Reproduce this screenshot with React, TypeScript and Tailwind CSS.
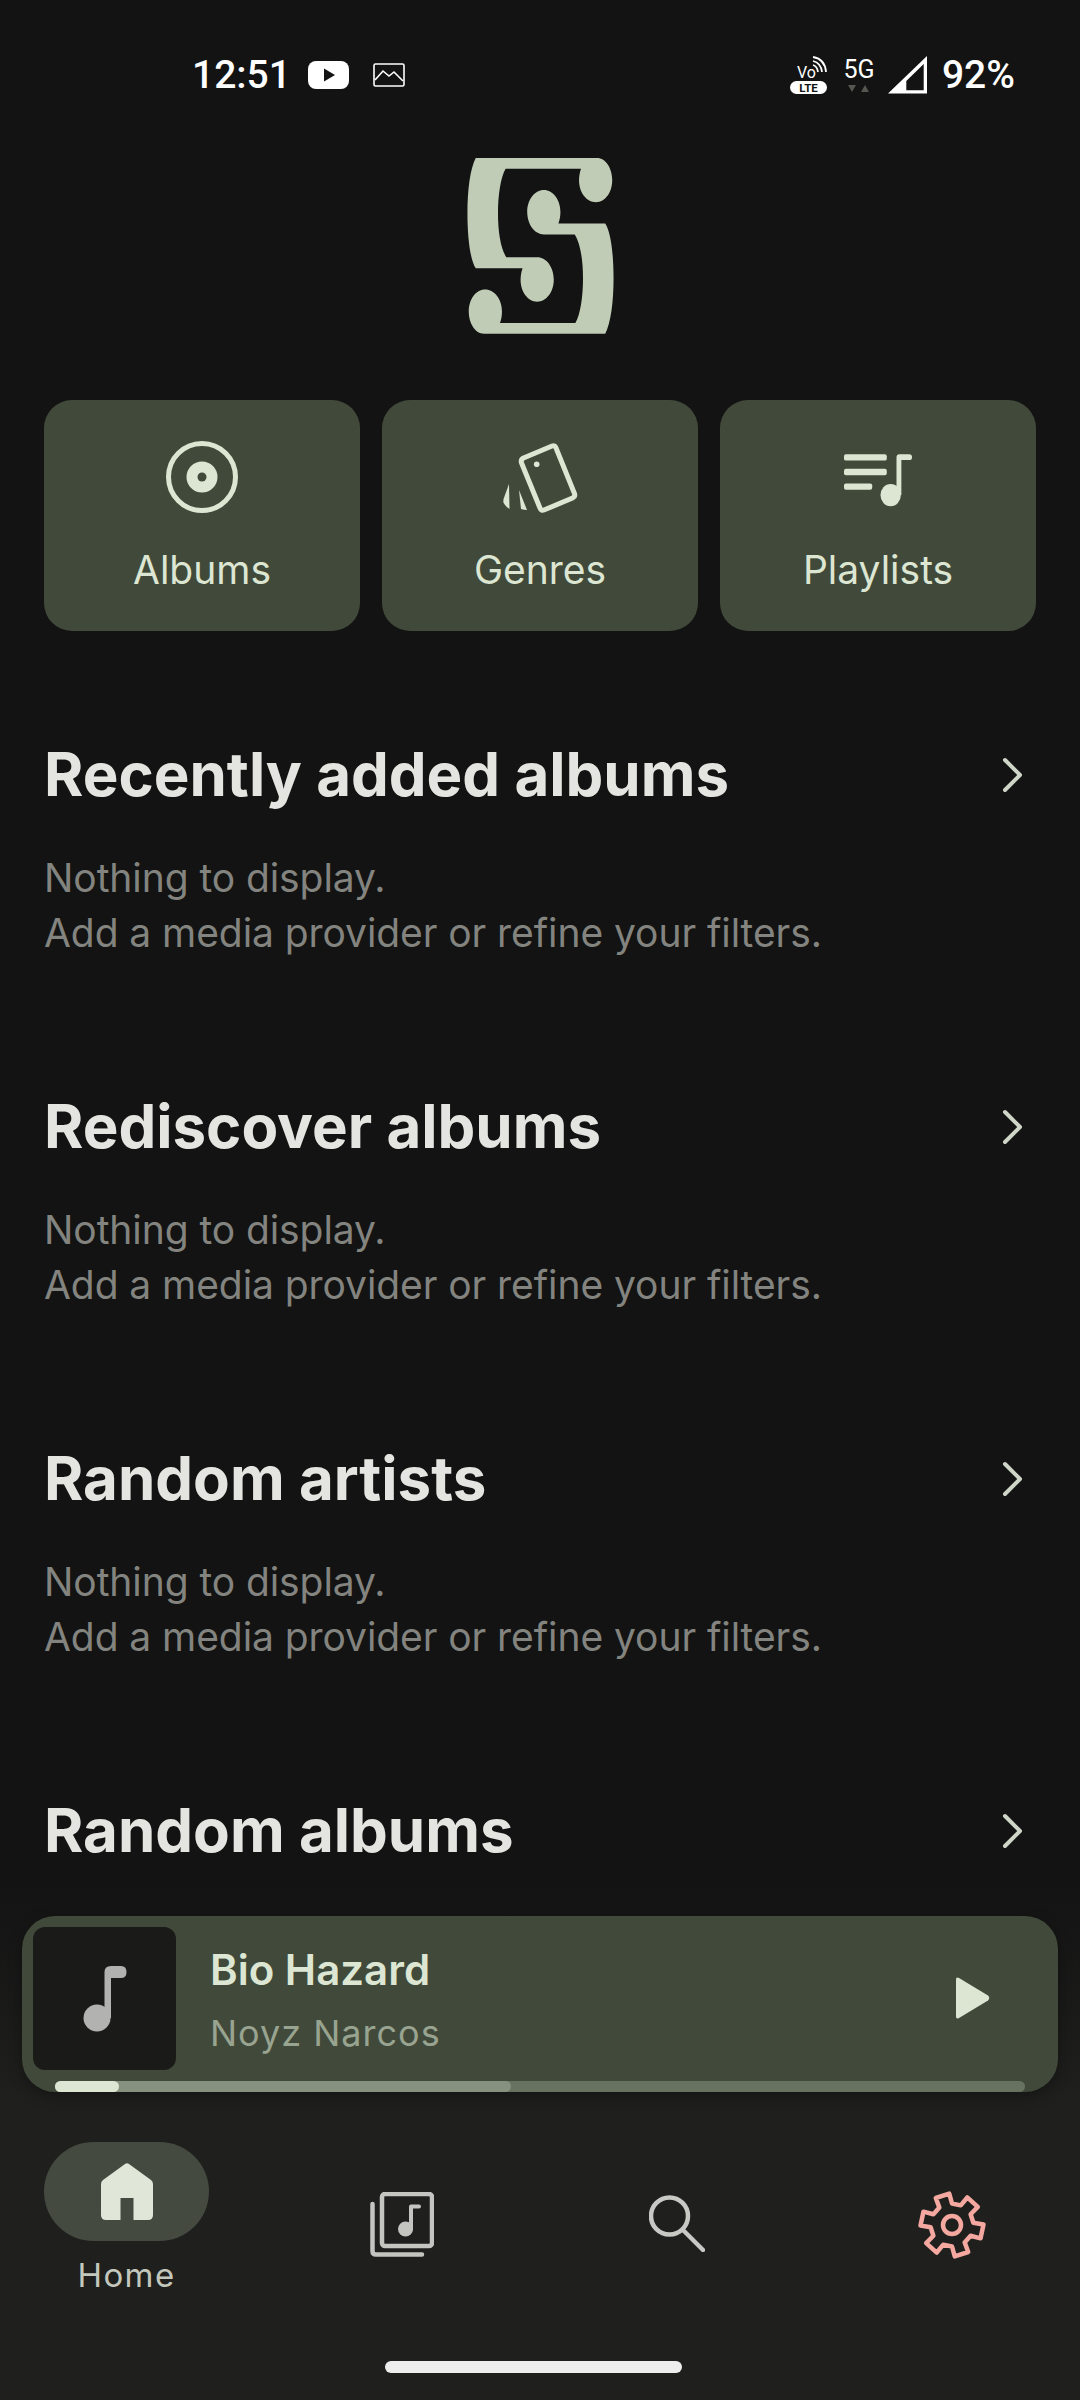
const gearPoints = (() => {
  const cx = 36;
  const cy = 36;
  const pts: string[] = [];
  for (let i = 0; i < 6; i++) {
    const a = -108 + i * 60;
    const list: [number, number][] = [
      [21.5, a - 18],
      [31.5, a - 13],
      [31.5, a + 13],
      [21.5, a + 18],
    ];
    for (const [r, d] of list) {
      const t = (d * Math.PI) / 180;
      pts.push(`${(cx + r * Math.cos(t)).toFixed(2)},${(cy + r * Math.sin(t)).toFixed(2)}`);
    }
  }
  return pts.join(" ");
})();

const LOGO =
  "M105 53 H470 C497 53 516 85 516 120 C516 156 495 186 467 186 C438 186 416 156 416 120 C416 108 418 96 422 85 H195 C180 110 172 165 172 220 C172 275 180 325 197 352 H290 C318 352 340 382 340 420 C340 456 318 486 290 486 C262 486 240 456 240 420 C240 408 242 396 246 385 H105 C88 360 80 290 80 220 C80 150 88 85 105 53 Z";

function StatusBar() {
  return (
    <div className="flex h-[158px] justify-between pl-[192px] pr-[65px] pt-[53px] text-white font-['Roboto',sans-serif]">
      <div className="flex h-[44px] items-center">
        <span className="text-[39px] leading-[44px] font-medium">12:51</span>
        <svg width="41" height="28" viewBox="0 0 41 28" className="ml-[17px]">
          <rect width="41" height="28" rx="8" fill="#fff" />
          <path d="M16 7.5 L27 14 L16 20.5 Z" fill="#121312" />
        </svg>
        <svg width="32" height="25" viewBox="0 0 32 25" className="ml-[24px]" fill="none" stroke="#fff" strokeWidth="1.6">
          <rect x="1" y="1" width="30" height="22" rx="1.5" />
          <path d="M2 17 L10 8 L16 13 L21 9 L30 18" />
        </svg>
      </div>
      <div className="flex h-[44px] items-center">
        <svg width="38" height="38" viewBox="0 0 38 38" fill="none">
          <text x="7" y="22" fontSize="16" fill="#fff" fontFamily="Roboto, sans-serif">Vo</text>
          <path d="M23 5 Q31 7 32 16 M23 1 Q35 3 36 16 M23 9 Q27 10 28 16" stroke="#fff" strokeWidth="1.8" />
          <rect x="0" y="25" width="37" height="13" rx="6.5" fill="#fff" />
          <text x="18.5" y="35.5" fontSize="11.5" fontWeight="700" fill="#121312" textAnchor="middle" fontFamily="Roboto, sans-serif">LTE</text>
        </svg>
        <div className="ml-[16px] flex w-[30px] flex-col items-center">
          <span className="text-[25px] leading-[24px]">5G</span>
          <svg width="22" height="9" viewBox="0 0 22 9" className="mt-[2px]">
            <path d="M0 1 H8 L4 8 Z M13 8 H21 L17 1 Z" fill="#55564f" />
          </svg>
        </div>
        <svg width="40" height="38" viewBox="0 0 40 38" className="ml-[14px]" fill="#fff" fillRule="evenodd">
          <path d="M39 0 V37.5 H0 Z M18.3 25 L35.7 8 V34.3 H18.3 Z" />
        </svg>
        <span className="ml-[14px] text-[39px] leading-[44px] font-medium">92%</span>
      </div>
    </div>
  );
}

function Logo() {
  return (
    <div className="flex justify-center">
      <svg width="147" height="176" viewBox="80 53 440 530" fill="#c0ccb6">
        <path d={LOGO} />
        <path d={LOGO} transform="rotate(180 300 317.5)" />
      </svg>
    </div>
  );
}

function AlbumsIcon() {
  return (
    <svg width="74" height="74" viewBox="0 0 74 74" fill="none">
      <circle cx="37" cy="37" r="33.5" stroke="#dce6d2" strokeWidth="5" />
      <circle cx="37" cy="37" r="15.5" fill="#dce6d2" />
      <circle cx="37" cy="37" r="4.5" fill="#414a3a" />
    </svg>
  );
}

function GenresIcon() {
  return (
    <svg viewBox="10 10 80 80" fill="none" className="mt-[6px] h-[80px] w-[80px]">
      <path
        d="M33.5 28 L62 16 Q65 15 66 18 L84.5 63.5 Q85.5 66.5 82.5 68 L54 80 Q51 81 50 78 L31.5 33 Q30.5 29.5 33.5 28 Z"
        stroke="#dce6d2"
        strokeWidth="5"
      />
      <circle cx="46.7" cy="34.3" r="2.8" fill="#dce6d2" />
      <path d="M19 54 L19.5 79 Q12 74 13.5 69 Z" fill="#dce6d2" />
      <path d="M29 60 L37 80 Q34 80 31 79 Z" fill="#dce6d2" />
    </svg>
  );
}

function PlaylistsIcon() {
  return (
    <svg width="70" height="53" viewBox="0 0 72 54" fill="#dce6d2" className="ml-[2px] mt-[7px]">
      <rect x="0" y="0" width="44" height="6.5" rx="2" />
      <rect x="0" y="15" width="44" height="6.5" rx="2" />
      <rect x="0" y="30" width="29" height="6.5" rx="2" />
      <ellipse cx="48" cy="42" rx="10.5" ry="11.5" />
      <path d="M54 42 V3 Q54 0 57 0 H67 Q70 0 70 3 Q70 6 67 6 H59 V42 Z" />
    </svg>
  );
}

function Card({ label, icon }: { label: string; icon: React.ReactNode }) {
  return (
    <div className="flex h-[231px] flex-1 flex-col items-center rounded-[28px] bg-[#414a3a] pt-[38px]">
      <div className="flex h-[78px] items-center justify-center">{icon}</div>
      <span className="mt-[29px] text-[39px] leading-[50px] text-[#dce6d2]">{label}</span>
    </div>
  );
}

function Section({ title, body = true }: { title: string; body?: boolean }) {
  return (
    <section className="h-[352px] px-[44px]">
      <div className="flex h-[72px] items-center justify-between">
        <h2 className="mb-[3px] text-[60px] leading-[72px] font-bold text-[#e4e4e0]">{title}</h2>
        <svg width="26" height="36" viewBox="0 0 26 36" fill="none" className="mr-[8px]">
          <path d="M3 3 L18 18 L3 33" stroke="#cfd5c7" strokeWidth="4" strokeLinecap="round" strokeLinejoin="round" />
        </svg>
      </div>
      <p className={body ? "mt-[39px] text-[39px] leading-[55px] tracking-[-0.07px] text-[#83837f]" : "hidden"}>
        Nothing to display.
        <br />
        Add a media provider or refine your filters.
      </p>
    </section>
  );
}

function MiniPlayer() {
  return (
    <div className="absolute left-[22px] top-[1916px] h-[176px] w-[1036px] overflow-hidden rounded-[33px] bg-[#414a3a] shadow-[0_4px_14px_rgba(0,0,0,0.35)]">
      <div className="flex h-[165px] items-start pl-[11px] pr-[68px] pt-[11px]">
        <div className="flex h-[143px] w-[143px] items-center justify-center rounded-[12px] bg-[#1a1a18]">
          <svg width="44" height="66" viewBox="0 0 44 66" fill="#b2b2b0">
            <circle cx="14" cy="52" r="13.5" />
            <path d="M21.5 52 V6 Q21.5 0 28 0 H38 Q43.5 0 43.5 6 Q43.5 12 38 12 H28 V52 Z" />
          </svg>
        </div>
        <div className="ml-[34px] flex-1 pt-[17px]">
          <div className="text-[42px] leading-[52px] font-semibold text-[#dce6d2]">Bio Hazard</div>
          <div className="mt-[13px] text-[36px] leading-[48px] tracking-[1px] text-[#98a390]">Noyz Narcos</div>
        </div>
        <svg width="34" height="42" viewBox="0 0 34 42" className="mt-[50px]" fill="#dce6d2">
          <path d="M0 2.5 Q0 -0.5 3 1 L32 18.5 Q34.5 21 32 23.5 L3 41 Q0 42.5 0 39.5 Z" />
        </svg>
      </div>
      <div className="relative ml-[33px] h-[11px] w-[970px] rounded-full bg-[#687260]">
        <div className="absolute left-0 top-0 h-[11px] w-[456px] rounded-full bg-[#87917f]" />
        <div className="absolute left-0 top-0 h-[11px] w-[64px] rounded-full bg-[#dce6d2]" />
      </div>
    </div>
  );
}

function BottomNav() {
  return (
    <nav className="h-[300px] bg-[#1f201e] pt-[42px]">
      <div className="flex justify-between pl-[44px] pr-[46px]">
        <div className="flex w-[165px] flex-col items-center">
          <div className="flex h-[99px] w-[165px] items-center justify-center rounded-full bg-[#444a40]">
            <svg width="52" height="57" viewBox="0 0 52 57" fill="#e0e6d8" fillRule="evenodd">
              <path d="M24 1 Q26 -0.5 28 1 L50 17 Q52 18.5 52 21 V52 Q52 57 47 57 H32.5 V35 H19.5 V57 H5 Q0 57 0 52 V21 Q0 18.5 2 17 Z" />
            </svg>
          </div>
          <span className="mt-[14px] text-[33px] leading-[40px] tracking-[1.4px] text-[#c3c7bc]">Home</span>
        </div>
        <div className="flex w-[165px] justify-center pt-[50px]">
          <svg width="64" height="65" viewBox="0 0 64 65" fill="none" stroke="#c4c4c0" strokeWidth="4.5">
            <rect x="12" y="2" width="50" height="52" rx="3" />
            <path d="M2.5 12 V59 Q2.5 62.5 6 62.5 H52" strokeLinecap="round" />
            <circle cx="35.5" cy="37" r="7.5" fill="#c4c4c0" stroke="none" />
            <path d="M41 37 V14.5 H49" strokeWidth="4" strokeLinecap="round" strokeLinejoin="round" />
          </svg>
        </div>
        <div className="flex w-[165px] justify-center pt-[53px]">
          <svg width="56" height="57" viewBox="0 0 56 57" fill="none" stroke="#c8c8c4" strokeWidth="4.5" strokeLinecap="round">
            <circle cx="20.5" cy="21" r="18.5" />
            <path d="M34 35 L54 55" />
          </svg>
        </div>
        <div className="flex w-[165px] justify-center pt-[47px]">
          <svg width="72" height="72" viewBox="0 0 72 72" fill="none" stroke="#f4a8a0" strokeWidth="4.5" strokeLinejoin="round">
            <polygon points={gearPoints} />
            <circle cx="36" cy="36" r="9" />
          </svg>
        </div>
      </div>
    </nav>
  );
}

export default function App() {
  return (
    <div className="relative flex h-[2400px] w-[1080px] flex-col overflow-hidden bg-[#121312] font-['Inter',sans-serif]">
      <main className="flex-1 overflow-hidden">
        <StatusBar />
        <Logo />
        <div className="mt-[66px] flex gap-[22px] px-[44px]">
          <Card label="Albums" icon={<AlbumsIcon />} />
          <Card label="Genres" icon={<GenresIcon />} />
          <Card label="Playlists" icon={<PlaylistsIcon />} />
        </div>
        <div className="mt-[108px]">
          <Section title="Recently added albums" />
          <Section title="Rediscover albums" />
          <Section title="Random artists" />
          <Section title="Random albums" body={false} />
        </div>
      </main>
      <div className="absolute left-0 top-[1880px] h-[220px] w-full bg-gradient-to-b from-[#121312] to-[#1f201e]" />
      <MiniPlayer />
      <BottomNav />
      <div className="absolute left-[385px] top-[2361px] h-[12px] w-[297px] rounded-full bg-[#eeeeee]" />
    </div>
  );
}
